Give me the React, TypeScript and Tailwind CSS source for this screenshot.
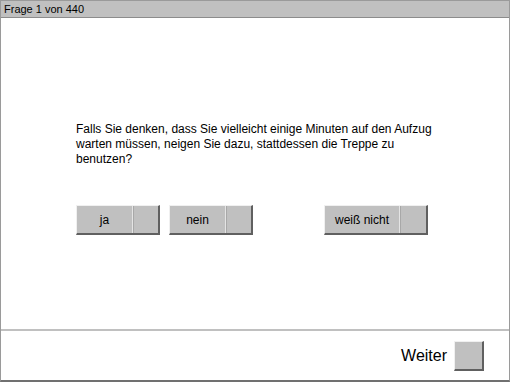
const Choice = ({ label, width, split }: { label: string; width: string; split: string }) => (
  <button
    className={`flex h-[30px] ${width} border border-t-[#f0f0f0] border-l-[#f0f0f0] border-r-[#606060] border-b-[#606060] border-b-2 border-r-2 bg-[#c0c0c0] p-0 text-[12px] text-black`}
  >
    <span className={`flex h-full ${split} items-center justify-center border-r border-r-[#e4e4e4]`}>{label}</span>
    <span className="h-full flex-1 border-l border-l-[#a8a8a8]" />
  </button>
);

const App = () => {
  return (
    <div
      className="flex h-[382px] w-[510px] flex-col border border-b-2 border-[#9a9a9a] border-b-[#707070] bg-white"
      style={{ fontFamily: '"Liberation Sans", Arial, sans-serif' }}
    >
      <div className="flex h-[17px] items-center border-b border-[#8c8c8c] bg-[#c0c0c0] pl-[3px] text-[11px] leading-none text-black">
        Frage 1 von 440
      </div>

      <div className="flex flex-1 flex-col pl-[75px] pt-[104px]">
        <p className="w-[370px] text-[12px] leading-[15px] text-black">
          Falls Sie denken, dass Sie vielleicht einige Minuten auf den Aufzug warten müssen, neigen Sie dazu, stattdessen die Treppe zu benutzen?
        </p>
        <div className="mt-[38px] flex">
          <Choice label="ja" width="w-[84px]" split="w-[56px]" />
          <div className="w-[9px]" />
          <Choice label="nein" width="w-[84px]" split="w-[56px]" />
          <div className="w-[71px]" />
          <Choice label="weiß nicht" width="w-[104px]" split="w-[75px]" />
        </div>
      </div>

      <div className="h-[2px] bg-[#c0c0c0]" />

      <div className="flex h-[49px] items-center justify-end pr-[25px] pt-[1px]">
        <span className="mr-[7px] text-[16px] text-black">Weiter</span>
        <div className="h-[30px] w-[30px] border border-t-[#f0f0f0] border-l-[#f0f0f0] border-r-2 border-b-2 border-r-[#606060] border-b-[#606060] bg-[#c0c0c0]" />
      </div>
    </div>
  );
};

export default App;
